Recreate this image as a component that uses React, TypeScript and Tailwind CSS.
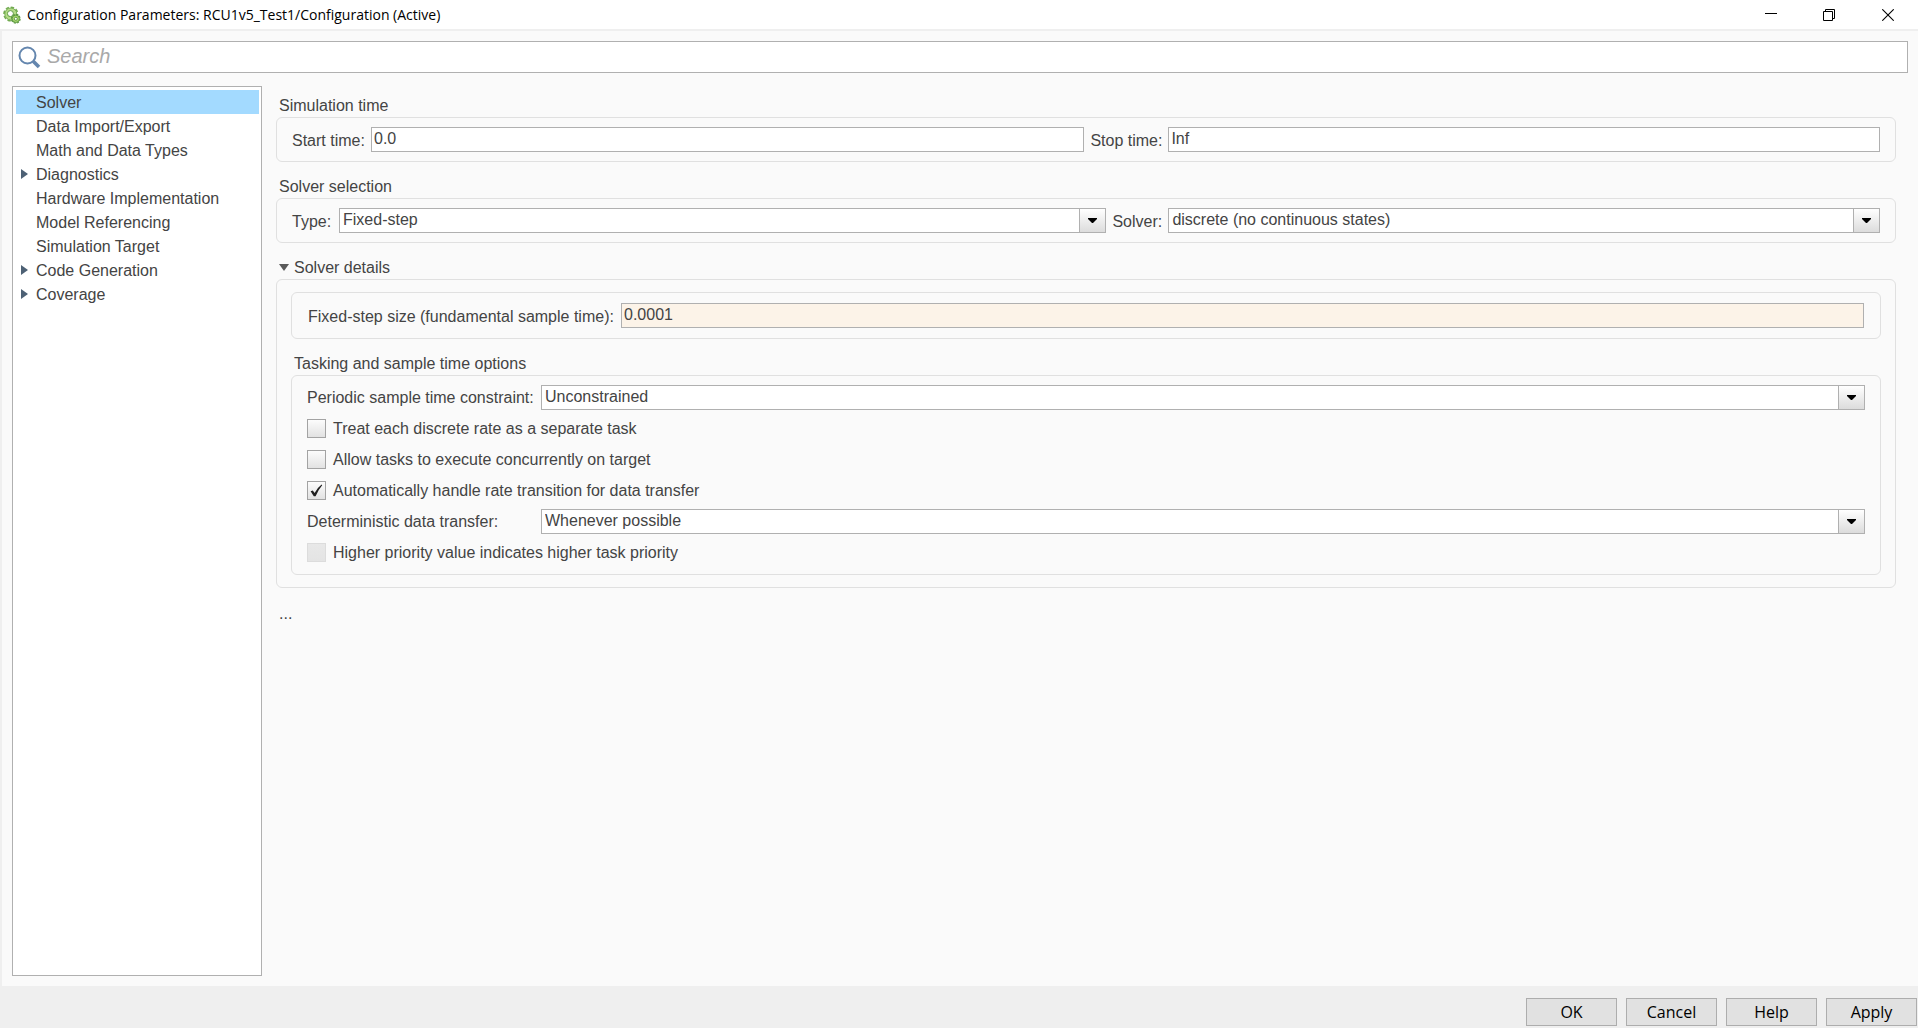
import { ChangeEvent, ReactNode, useState } from 'react';

interface FieldProps {
    id: string;
    value: string;
    className?: string;
}

interface PanelProps {
    children: ReactNode;
    className?: string;
}

interface OptionProps {
    id: string;
    label: string;
    checked?: boolean;
    disabled?: boolean;
}

const categories = [
    { name: 'Solver', expandable: false },
    { name: 'Data Import/Export', expandable: false },
    { name: 'Math and Data Types', expandable: false },
    { name: 'Diagnostics', expandable: true },
    { name: 'Hardware Implementation', expandable: false },
    { name: 'Model Referencing', expandable: false },
    { name: 'Simulation Target', expandable: false },
    { name: 'Code Generation', expandable: true },
    { name: 'Coverage', expandable: true },
];

function Panel({ children, className = '' }: PanelProps) {
    return <div className={`rounded-md border border-[#e0e0e0] ${className}`}>{children}</div>;
}

function TextField({ id, value, className = 'bg-white' }: FieldProps) {
    const [text, setText] = useState(value);

    return (
        <input
            id={id}
            type="text"
            value={text}
            onChange={(e: ChangeEvent<HTMLInputElement>) => setText(e.target.value)}
            className={`h-[25px] min-w-0 border border-[#b0b0b0] px-0.5 pb-px outline-none ${className}`}
        />
    );
}

function SelectField({ id, value, className = 'flex-1' }: FieldProps) {
    return (
        <div className={`flex h-[25px] min-w-0 border border-[#b0b0b0] bg-white ${className}`}>
            <select id={id} defaultValue={value} className="min-w-0 flex-1 appearance-none pr-1 pb-px pl-[3px] outline-none">
                <option>{value}</option>
            </select>
            <span className="pointer-events-none flex w-[26px] items-center justify-center border-l border-[#b0b0b0] bg-linear-to-b from-white to-[#dcdcdc]">
                <svg width="9" height="5" viewBox="0 0 9 5">
                    <path d="M0 0h9v1L5 5H4L0 1z" fill="#000" />
                </svg>
            </span>
        </div>
    );
}

function Option({ id, label, checked = false, disabled = false }: OptionProps) {
    const [on, setOn] = useState(checked);

    return (
        <div className="flex h-[31px] items-center">
            <span className="grid h-[19px] w-[19px]">
                <input
                    id={id}
                    type="checkbox"
                    checked={on}
                    disabled={disabled}
                    onChange={() => setOn(!on)}
                    className="col-start-1 row-start-1 h-[19px] w-[19px] appearance-none border border-[#a3a3a3] bg-linear-to-b from-[#fcfcfc] to-[#e2e2e2] disabled:border-[#dcdcdc] disabled:from-[#e8e8e8] disabled:to-[#e4e4e4]"
                />
                {on && (
                    <svg className="pointer-events-none col-start-1 row-start-1" width="19" height="19" viewBox="0 0 19 19">
                        <path d="M3.6 10.2 5.8 9.4 7.6 12 Q10.6 6.6 14.6 3.6 L15.2 4.2 Q11.2 8.8 8.6 15.2 L6.8 15.2z" fill="#1e1e1e" />
                    </svg>
                )}
            </span>
            <label htmlFor={id} className="pt-px pl-[7px]">{label}</label>
        </div>
    );
}

function AppIcon() {
    return (
        <svg width="18" height="18" viewBox="0 0 18 18">
            <circle cx="7.8" cy="8" r="6.8" fill="none" stroke="#74ac52" strokeWidth="1.6" strokeDasharray="3.4 1.9" />
            <circle cx="7.8" cy="8" r="6" fill="#b4dc86" stroke="#6ba64b" strokeWidth="0.9" />
            <circle cx="7.4" cy="7.6" r="3" fill="#fff" stroke="#5f9d45" strokeWidth="1" />
            <circle cx="12.8" cy="12.8" r="4.3" fill="none" stroke="#57933d" strokeWidth="1.2" strokeDasharray="2.2 1.1" />
            <circle cx="12.8" cy="12.8" r="3.7" fill="#a6d66e" stroke="#57933d" strokeWidth="0.9" />
            <circle cx="12.8" cy="12.8" r="1.5" fill="#fff" stroke="#57933d" strokeWidth="0.9" />
        </svg>
    );
}

function TitleBar() {
    return (
        <header className="flex h-[31px] items-center border-b-2 border-[#efefef] bg-white pl-[3px] text-black">
            <AppIcon />
            <h1 className="flex-1 pl-1.5 font-['Open_Sans','Noto_Sans',sans-serif] text-[14px] leading-5">
                Configuration Parameters: RCU1v5_Test1/Configuration (Active)
            </h1>
            <button type="button" aria-label="Minimize" className="flex h-full w-[58px] items-center justify-center">
                <svg width="12" height="12" viewBox="0 0 12 12">
                    <path d="M0 4.5h12" stroke="#000" />
                </svg>
            </button>
            <button type="button" aria-label="Restore" className="flex h-full w-[58px] items-center justify-center">
                <svg width="12" height="12" viewBox="0 0 12 12" fill="none" stroke="#000">
                    <path d="M.5 2.5h9v9h-9zM2.5 2.5v-2h9v9h-2" />
                </svg>
            </button>
            <button type="button" aria-label="Close" className="flex h-full w-[60px] items-center justify-center">
                <svg width="12" height="12" viewBox="0 0 12 12">
                    <path d="M.3.3l11.4 11.4M11.7.3.3 11.7" stroke="#000" strokeWidth="1.1" />
                </svg>
            </button>
        </header>
    );
}

function SearchBar() {
    const [query, setQuery] = useState('');

    return (
        <div className="flex h-8 items-center border border-[#b0b0b0] bg-white pl-[5px]">
            <svg width="23" height="23" viewBox="0 0 23 23" fill="none" stroke="#6486ae">
                <circle cx="9.5" cy="9.5" r="8" strokeWidth="2" />
                <path d="M15.2 15.2 21 21" strokeWidth="3.6" />
            </svg>
            <input
                type="text"
                aria-label="Search"
                placeholder="Search"
                value={query}
                onChange={(e: ChangeEvent<HTMLInputElement>) => setQuery(e.target.value)}
                className="min-w-0 flex-1 pb-0.5 pl-1.5 text-[20px] leading-7 outline-none placeholder:text-[#a9a9a9] placeholder:italic"
            />
        </div>
    );
}

function Sidebar() {
    const [selected, setSelected] = useState('Solver');

    return (
        <nav className="w-[250px] shrink-0 border border-[#b0b0b0] bg-white p-[3px] pr-0.5">
            <ul>
                {categories.map((c) => (
                    <li key={c.name}>
                        <button
                            type="button"
                            onClick={() => setSelected(c.name)}
                            className={`flex h-6 w-full items-center text-left ${selected === c.name ? 'bg-[#a3daff]' : ''}`}
                        >
                            <span className="flex w-5 pl-[5px]">
                                {c.expandable && (
                                    <svg width="7" height="10" viewBox="0 0 7 10">
                                        <path d="M0 0l7 5-7 5z" fill="#4d6175" />
                                    </svg>
                                )}
                            </span>
                            <span className="pt-px">{c.name}</span>
                        </button>
                    </li>
                ))}
            </ul>
        </nav>
    );
}

function SolverPane() {
    const [open, setOpen] = useState(true);

    return (
        <main className="min-w-0 flex-1 pr-3 pl-[14px]">
            <h2 className="h-[31px] pt-2.5 pl-[3px]">Simulation time</h2>
            <Panel className="flex h-[45px] items-center px-[15px]">
                <label htmlFor="start" className="w-[79px] shrink-0 pt-0.5">Start time:</label>
                <TextField id="start" value="0.0" className="flex-1 bg-white" />
                <label htmlFor="stop" className="w-[84px] shrink-0 pt-0.5 pl-1.5">Stop time:</label>
                <TextField id="stop" value="Inf" className="w-[calc(45%-3px)] bg-white" />
            </Panel>

            <h2 className="h-9 pt-[15px] pl-[3px]">Solver selection</h2>
            <Panel className="flex h-[45px] items-center px-[15px]">
                <label htmlFor="type" className="w-[47px] shrink-0 pt-0.5">Type:</label>
                <SelectField id="type" value="Fixed-step" />
                <label htmlFor="solver" className="w-[62px] shrink-0 pt-0.5 pl-1.5">Solver:</label>
                <SelectField id="solver" value="discrete (no continuous states)" className="w-[calc(45%-3px)]" />
            </Panel>

            <h2 className="h-9 pt-[15px] pl-[3px]">
                <button type="button" onClick={() => setOpen(!open)} className="flex items-center">
                    <svg width="10" height="10" viewBox="0 0 10 10">
                        <path d="M0 1h10L5 8z" fill="#5a5a5a" />
                    </svg>
                    <span className="pl-[5px]">Solver details</span>
                </button>
            </h2>
            {open && (
                <Panel className="px-[14px] py-3">
                    <Panel className="flex h-[47px] items-center px-4">
                        <label htmlFor="step" className="w-[313px] shrink-0 pt-0.5">
                            Fixed-step size (fundamental sample time):
                        </label>
                        <TextField id="step" value="0.0001" className="flex-1 bg-[#fcf3e8]" />
                    </Panel>

                    <h3 className="h-9 pt-[15px] pl-[3px]">Tasking and sample time options</h3>
                    <Panel className="px-[15px] py-1.5">
                        <div className="flex h-[31px] items-center">
                            <label htmlFor="periodic" className="w-[234px] shrink-0 pt-px">Periodic sample time constraint:</label>
                            <SelectField id="periodic" value="Unconstrained" />
                        </div>
                        <Option id="separate" label="Treat each discrete rate as a separate task" />
                        <Option id="concurrent" label="Allow tasks to execute concurrently on target" />
                        <Option id="transition" label="Automatically handle rate transition for data transfer" checked />
                        <div className="flex h-[31px] items-center">
                            <label htmlFor="transfer" className="w-[234px] shrink-0 pt-px">Deterministic data transfer:</label>
                            <SelectField id="transfer" value="Whenever possible" />
                        </div>
                        <Option id="priority" label="Higher priority value indicates higher task priority" disabled />
                    </Panel>
                </Panel>
            )}
            <button type="button" className="mt-4 ml-[3px] block">...</button>
        </main>
    );
}

export default function App() {
    return (
        <div className="flex min-h-screen flex-col bg-[#efefef] font-['Liberation_Sans',Arial,sans-serif] text-[16px] leading-5 text-[#444]">
            <TitleBar />
            <div className="ml-0.5 flex flex-1 flex-col bg-[#fafafa] p-2.5">
                <SearchBar />
                <div className="flex flex-1 pt-[13px]">
                    <Sidebar />
                    <SolverPane />
                </div>
            </div>
            <footer className="flex h-[42px] items-center justify-end gap-[9px] pt-2.5 pr-px font-['Open_Sans','Noto_Sans',sans-serif] text-black">
                {['OK', 'Cancel', 'Help', 'Apply'].map((name) => (
                    <button key={name} type="button" className="h-7 w-[91px] border border-[#adadad] bg-[#e1e1e1]">
                        {name}
                    </button>
                ))}
            </footer>
        </div>
    );
}
